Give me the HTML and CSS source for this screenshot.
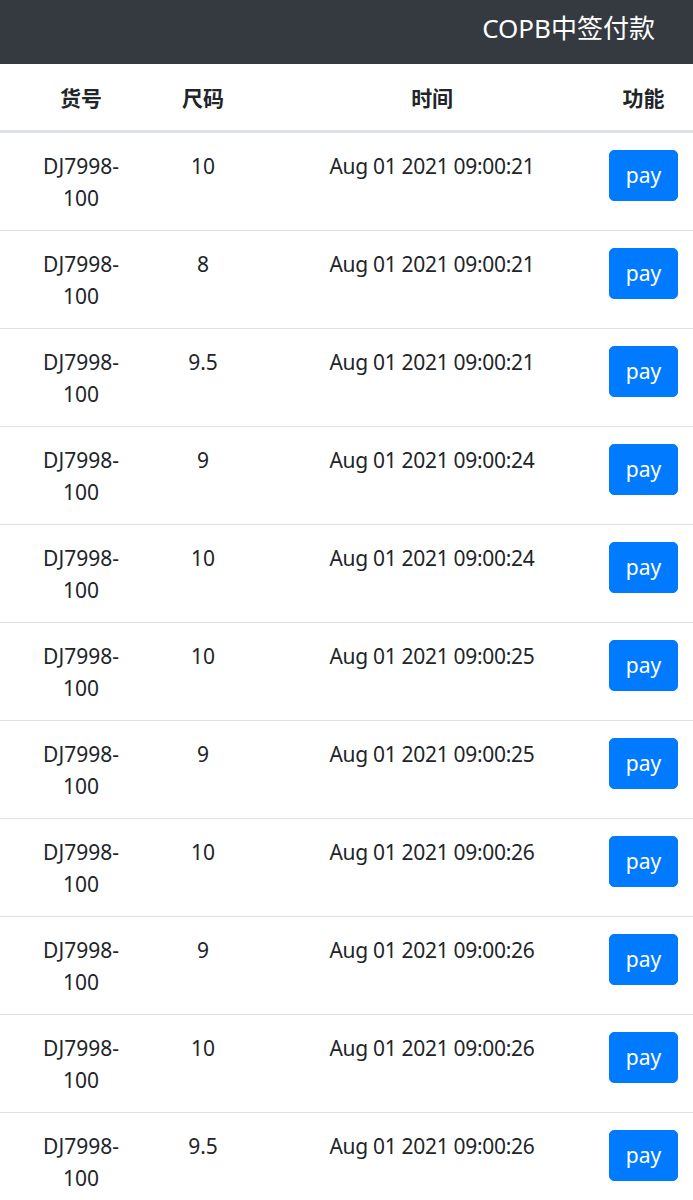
FILE: index.html
```html
<!DOCTYPE html>
<html lang="zh">

<head>
  <meta charset="UTF-8">
  <meta name="viewport" content="width=device-width, initial-scale=1.0">
  <title>COPB中签付款</title>
  <link rel="stylesheet" href="styles.css">
</head>

<body>
  <nav class="navbar">
    <span class="navbar-brand">COPB中签付款</span>
  </nav>

  <table class="table">
    <thead>
      <tr>
        <th class="col-sku">货号</th>
        <th class="col-size">尺码</th>
        <th class="col-time">时间</th>
        <th class="col-action">功能</th>
      </tr>
    </thead>
    <tbody>
      <tr>
        <td class="col-sku">DJ7998-<wbr>100</td>
        <td class="col-size">10</td>
        <td class="col-time">Aug 01 2021 09:00:21</td>
        <td class="col-action"><button class="btn-pay" type="button">pay</button></td>
      </tr>
      <tr>
        <td class="col-sku">DJ7998-<wbr>100</td>
        <td class="col-size">8</td>
        <td class="col-time">Aug 01 2021 09:00:21</td>
        <td class="col-action"><button class="btn-pay" type="button">pay</button></td>
      </tr>
      <tr>
        <td class="col-sku">DJ7998-<wbr>100</td>
        <td class="col-size">9.5</td>
        <td class="col-time">Aug 01 2021 09:00:21</td>
        <td class="col-action"><button class="btn-pay" type="button">pay</button></td>
      </tr>
      <tr>
        <td class="col-sku">DJ7998-<wbr>100</td>
        <td class="col-size">9</td>
        <td class="col-time">Aug 01 2021 09:00:24</td>
        <td class="col-action"><button class="btn-pay" type="button">pay</button></td>
      </tr>
      <tr>
        <td class="col-sku">DJ7998-<wbr>100</td>
        <td class="col-size">10</td>
        <td class="col-time">Aug 01 2021 09:00:24</td>
        <td class="col-action"><button class="btn-pay" type="button">pay</button></td>
      </tr>
      <tr>
        <td class="col-sku">DJ7998-<wbr>100</td>
        <td class="col-size">10</td>
        <td class="col-time">Aug 01 2021 09:00:25</td>
        <td class="col-action"><button class="btn-pay" type="button">pay</button></td>
      </tr>
      <tr>
        <td class="col-sku">DJ7998-<wbr>100</td>
        <td class="col-size">9</td>
        <td class="col-time">Aug 01 2021 09:00:25</td>
        <td class="col-action"><button class="btn-pay" type="button">pay</button></td>
      </tr>
      <tr>
        <td class="col-sku">DJ7998-<wbr>100</td>
        <td class="col-size">10</td>
        <td class="col-time">Aug 01 2021 09:00:26</td>
        <td class="col-action"><button class="btn-pay" type="button">pay</button></td>
      </tr>
      <tr>
        <td class="col-sku">DJ7998-<wbr>100</td>
        <td class="col-size">9</td>
        <td class="col-time">Aug 01 2021 09:00:26</td>
        <td class="col-action"><button class="btn-pay" type="button">pay</button></td>
      </tr>
      <tr>
        <td class="col-sku">DJ7998-<wbr>100</td>
        <td class="col-size">10</td>
        <td class="col-time">Aug 01 2021 09:00:26</td>
        <td class="col-action"><button class="btn-pay" type="button">pay</button></td>
      </tr>
      <tr>
        <td class="col-sku">DJ7998-<wbr>100</td>
        <td class="col-size">9.5</td>
        <td class="col-time">Aug 01 2021 09:00:26</td>
        <td class="col-action"><button class="btn-pay" type="button">pay</button></td>
      </tr>
    </tbody>
  </table>
</body>

</html>
```

FILE: styles.css
```css
body {
  margin: 0;
  font-family: "Noto Sans", "Noto Sans CJK SC", sans-serif;
  font-size: 21px;
  line-height: 32px;
  color: #212529;
  background-color: #fff;
}

.navbar {
  height: 64px;
  box-sizing: border-box;
  padding: 8px 38px 16px;
  background-color: #343a40;
  text-align: right;
}

.navbar-brand {
  font-size: 26px;
  line-height: 40px;
  color: #fff;
}

.table {
  width: 100%;
  border-collapse: collapse;
  table-layout: fixed;
}

.table th,
.table td {
  text-align: center;
  vertical-align: top;
}

.table th {
  padding-top: 18px;
  padding-bottom: 16px;
  font-weight: bold;
  border-bottom: 3px solid #dee2e6;
}

.table td {
  padding-top: 17px;
  padding-bottom: 16px;
  border-top: 1px solid #dee2e6;
}

.col-sku {
  width: 82px;
  padding-left: 40px;
  padding-right: 40px;
}

.col-size {
  width: 82px;
  padding-left: 0;
  padding-right: 0;
}

.col-time {
  width: 354px;
  padding-left: 11px;
  padding-right: 0;
  letter-spacing: -0.3px;
}

.col-action {
  width: 69px;
  padding-left: 0;
  padding-right: 15px;
}

.btn-pay {
  display: inline-block;
  vertical-align: top;
  width: 69px;
  height: 51px;
  padding: 0;
  border: 1px solid #007bff;
  border-radius: 5px;
  background-color: #007bff;
  color: #fff;
  font-family: inherit;
  font-size: 21px;
  line-height: 47px;
  cursor: pointer;
}

.btn-pay:hover {
  background-color: #0069d9;
}
```
